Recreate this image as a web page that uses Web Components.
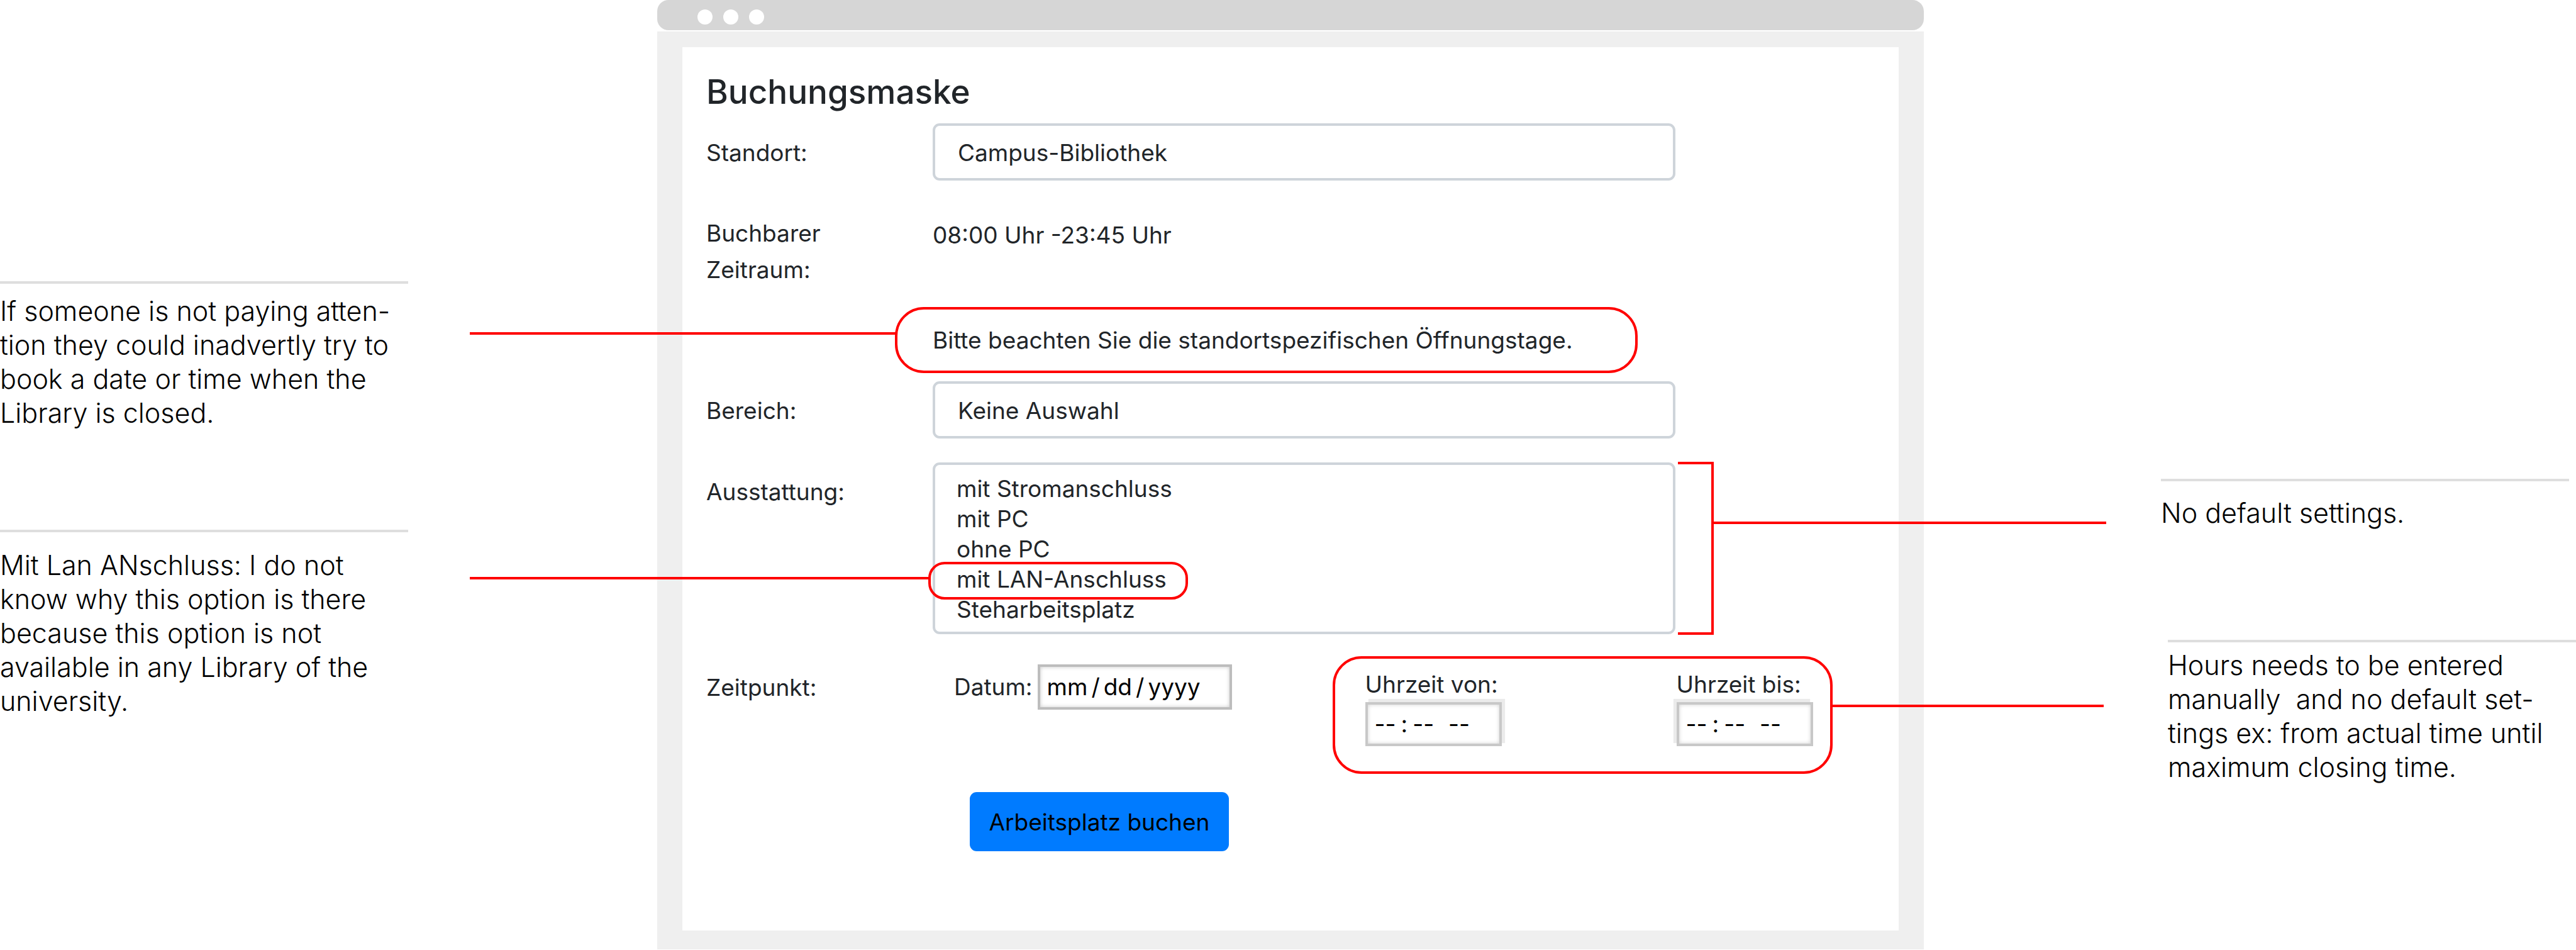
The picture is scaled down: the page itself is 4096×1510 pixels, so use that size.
<!DOCTYPE html>
<html lang="de">
<head>
<meta charset="utf-8">
<title>Buchungsmaske</title>
<style>
  body { margin: 0; background: #fff; }
</style>
</head>
<body>
<review-board>
  <margin-note slot="left" style="--gap: 16px">If someone is not paying atten-<br>tion they could inadvertly try to<br>book a date or time when the<br>Library is closed.</margin-note>
  <margin-note slot="left" style="--gap: 25px">Mit Lan ANschluss: I do not<br>know why this option is there<br>because this option is not<br>available in any Library of the<br>university.</margin-note>
  <browser-window>
    <booking-form></booking-form>
  </browser-window>
  <margin-note slot="right" style="--gap: 23px">No default settings.</margin-note>
  <margin-note slot="right" style="--gap: 9px">Hours needs to be entered<br>manually&nbsp; and no default set-<br>tings ex: from actual time until<br>maximum closing time.</margin-note>
</review-board>

<template id="review-board">
  <style>
    :host { display: grid; grid-template-columns: 1045fr 2014fr 1037fr; min-height: 100vh; }
    .left, .right { display: flex; flex-direction: column; }
    .left { padding-top: 447px; gap: 159px; }
    .right { padding: 761px 0 0 377px; gap: 175px; }
    .right ::slotted(:last-child) { margin-left: 11px; }
    main { display: flex; }
    main ::slotted(*) { flex: 1; }
  </style>
  <aside class="left"><slot name="left"></slot></aside>
  <main><slot></slot></main>
  <aside class="right"><slot name="right"></slot></aside>
</template>

<template id="margin-note">
  <style>
    :host { display: block; width: 649px; }
    p {
      margin: 0; padding-top: var(--gap, 16px); border-top: 4px solid #dedede;
      font: 300 43px/54px Inter, "Liberation Sans", sans-serif; color: #000; white-space: nowrap;
    }
  </style>
  <p><slot></slot></p>
</template>

<template id="browser-window">
  <style>
    :host { display: flex; flex-direction: column; gap: 2px; }
    header {
      display: flex; gap: 17px; align-items: center; box-sizing: border-box;
      height: 48px; padding: 6px 0 0 64px; border-radius: 18px; background: #d6d6d6;
    }
    i { width: 24px; height: 24px; border-radius: 50%; background: #fff; }
    .frame { flex: 1; display: flex; padding: 25px 40px 30px; background: #efefef; margin-bottom: 1px; }
    .page { flex: 1; background: #fff; }
  </style>
  <header><i></i><i></i><i></i></header>
  <div class="frame"><div class="page"><slot></slot></div></div>
</template>

<template id="callout-ring">
  <style>
    :host {
      display: block; position: relative; box-sizing: border-box;
      border: 4px solid #f00; border-radius: var(--radius, 46px);
    }
    .line { position: absolute; top: var(--line-top); width: var(--line-width); height: 4px; background: #f00; }
    :host([side="left"]) .line { right: 100%; }
    :host([side="right"]) .line { left: 100%; }
  </style>
  <slot></slot>
  <span class="line"></span>
</template>

<template id="booking-form">
  <style>
    :host { display: block; padding: 39px 0 39px 38px; font: 37px/58px Inter, "Open Sans", sans-serif; color: #212529; }
    h1 { margin: 0 0 18px; font-size: 53px; line-height: 64px; font-weight: 500; }
    .row { display: grid; grid-template-columns: 360px minmax(0, 1181px); }
    .row > * { grid-column: 2; }
    .row > .label { grid-column: 1; }
    .center { align-items: center; }
    .center .label { padding-top: 3px; }
    .period { margin-top: 55px; }
    .period p, .notice p { margin: 0; line-height: 64px; }
    .notice { margin: 30px 0 13px; }
    .notice callout-ring {
      display: flex; align-items: center; height: 105px; margin-left: -60px; padding-left: 56px;
      width: 100%; --line-top: 36px; --line-width: 680px;
    }
    .equipment { margin-top: 38px; }
    .equipment .label { padding-top: 18px; }
    select {
      appearance: none; box-sizing: border-box; width: 100%; margin: 0; font: inherit; color: inherit;
      background: #fff; border: 4px solid #ced4da; border-radius: 11px; outline: 0;
    }
    select.single { height: 91px; padding: 3px 36px 0; }
    select[multiple] { display: block; height: 273px; padding: 15px 34px 10px; overflow: hidden; }
    select[multiple] option { padding: 0; min-height: 48px; height: 48px; line-height: 48px; }
    .list { position: relative; }
    .lan { position: absolute; left: -7px; top: 158px; width: 413px; height: 60px; --radius: 26px; --line-top: 20px; --line-width: 733px; }
    .bracket {
      position: absolute; left: calc(100% + 4px); top: -1px; width: 57px; height: 275px;
      border-left: 0; --radius: 0; --line-top: 91px; --line-width: 628px;
    }
    .when { margin-top: 35px; }
    .when .label { padding-top: 21px; }
    .fields { display: flex; align-items: flex-start; width: max-content; }
    .date { display: flex; align-items: center; gap: 8px; padding: 13px 0 0 34px; margin-right: 160px; }
    input {
      box-sizing: border-box; margin: 0; padding: 0 0 0 10px; border: 4px solid #bdbdbd; border-radius: 0;
      font: inherit; line-height: 58px; color: #000; background: #fff; box-shadow: inset 0 0 6px #c8c8c8;
    }
    input::-webkit-calendar-picker-indicator { display: none; }
    input::-webkit-datetime-edit { padding: 0; }
    input::-webkit-datetime-edit-text { padding: 0 5px; }
    input[type="date"] { width: 309px; height: 72px; }
    .times { display: flex; justify-content: space-between; width: 795px; height: 187px; padding: 17px 27px 0 48px; --line-top: 73px; --line-width: 435px; }
    .time { display: flex; flex-direction: column; gap: 4px; width: 217px; line-height: 48px; white-space: nowrap; }
    input[type="time"] { height: 70px; border-color: #c8c8c8; }
    input[type="time"]::-webkit-datetime-edit-text { padding: 0 7px; }
    #from { box-shadow: inset 0 0 6px #d0d0d0, 5px -5px 1px #ebebeb; }
    #to { box-shadow: inset 0 0 6px #d0d0d0, -5px -5px 1px #ebebeb; }
    button {
      margin: 29px 0 0 419px; width: 412px; height: 94px; padding: 2px 0 0; border: 0; border-radius: 11px;
      background: #007bff; color: #000; font: inherit; white-space: nowrap;
    }
  </style>
  <form>
    <h1>Buchungsmaske</h1>
    <div class="row center">
      <label class="label" for="site">Standort:</label>
      <select class="single" id="site"><option>Campus-Bibliothek</option></select>
    </div>
    <div class="row period">
      <span class="label">Buchbarer<br>Zeitraum:</span>
      <p>08:00 Uhr -23:45 Uhr</p>
    </div>
    <div class="row notice">
      <callout-ring side="left"><p>Bitte beachten Sie die standortspezifischen Öffnungstage.</p></callout-ring>
    </div>
    <div class="row center">
      <label class="label" for="area">Bereich:</label>
      <select class="single" id="area"><option>Keine Auswahl</option></select>
    </div>
    <div class="row equipment">
      <label class="label" for="equipment">Ausstattung:</label>
      <div class="list">
        <select id="equipment" multiple size="5">
          <option>mit Stromanschluss</option>
          <option>mit PC</option>
          <option>ohne PC</option>
          <option>mit LAN-Anschluss</option>
          <option>Steharbeitsplatz</option>
        </select>
        <callout-ring class="lan" side="left"></callout-ring>
        <callout-ring class="bracket" side="right"></callout-ring>
      </div>
    </div>
    <div class="row when">
      <span class="label">Zeitpunkt:</span>
      <div class="fields">
        <div class="date"><label for="day">Datum:</label><input type="date" id="day"></div>
        <callout-ring class="times" side="right">
          <div class="time"><label for="from">Uhrzeit von:</label><input type="time" id="from"></div>
          <div class="time"><label for="to">Uhrzeit bis:</label><input type="time" id="to"></div>
        </callout-ring>
      </div>
    </div>
    <button type="button">Arbeitsplatz buchen</button>
  </form>
</template>

<script>
  for (const name of ['callout-ring', 'booking-form', 'browser-window', 'margin-note', 'review-board']) {
    customElements.define(name, class extends HTMLElement {
      constructor() {
        super();
        this.attachShadow({ mode: 'open' })
          .append(document.getElementById(name).content.cloneNode(true));
      }
    });
  }
</script>
</body>
</html>
